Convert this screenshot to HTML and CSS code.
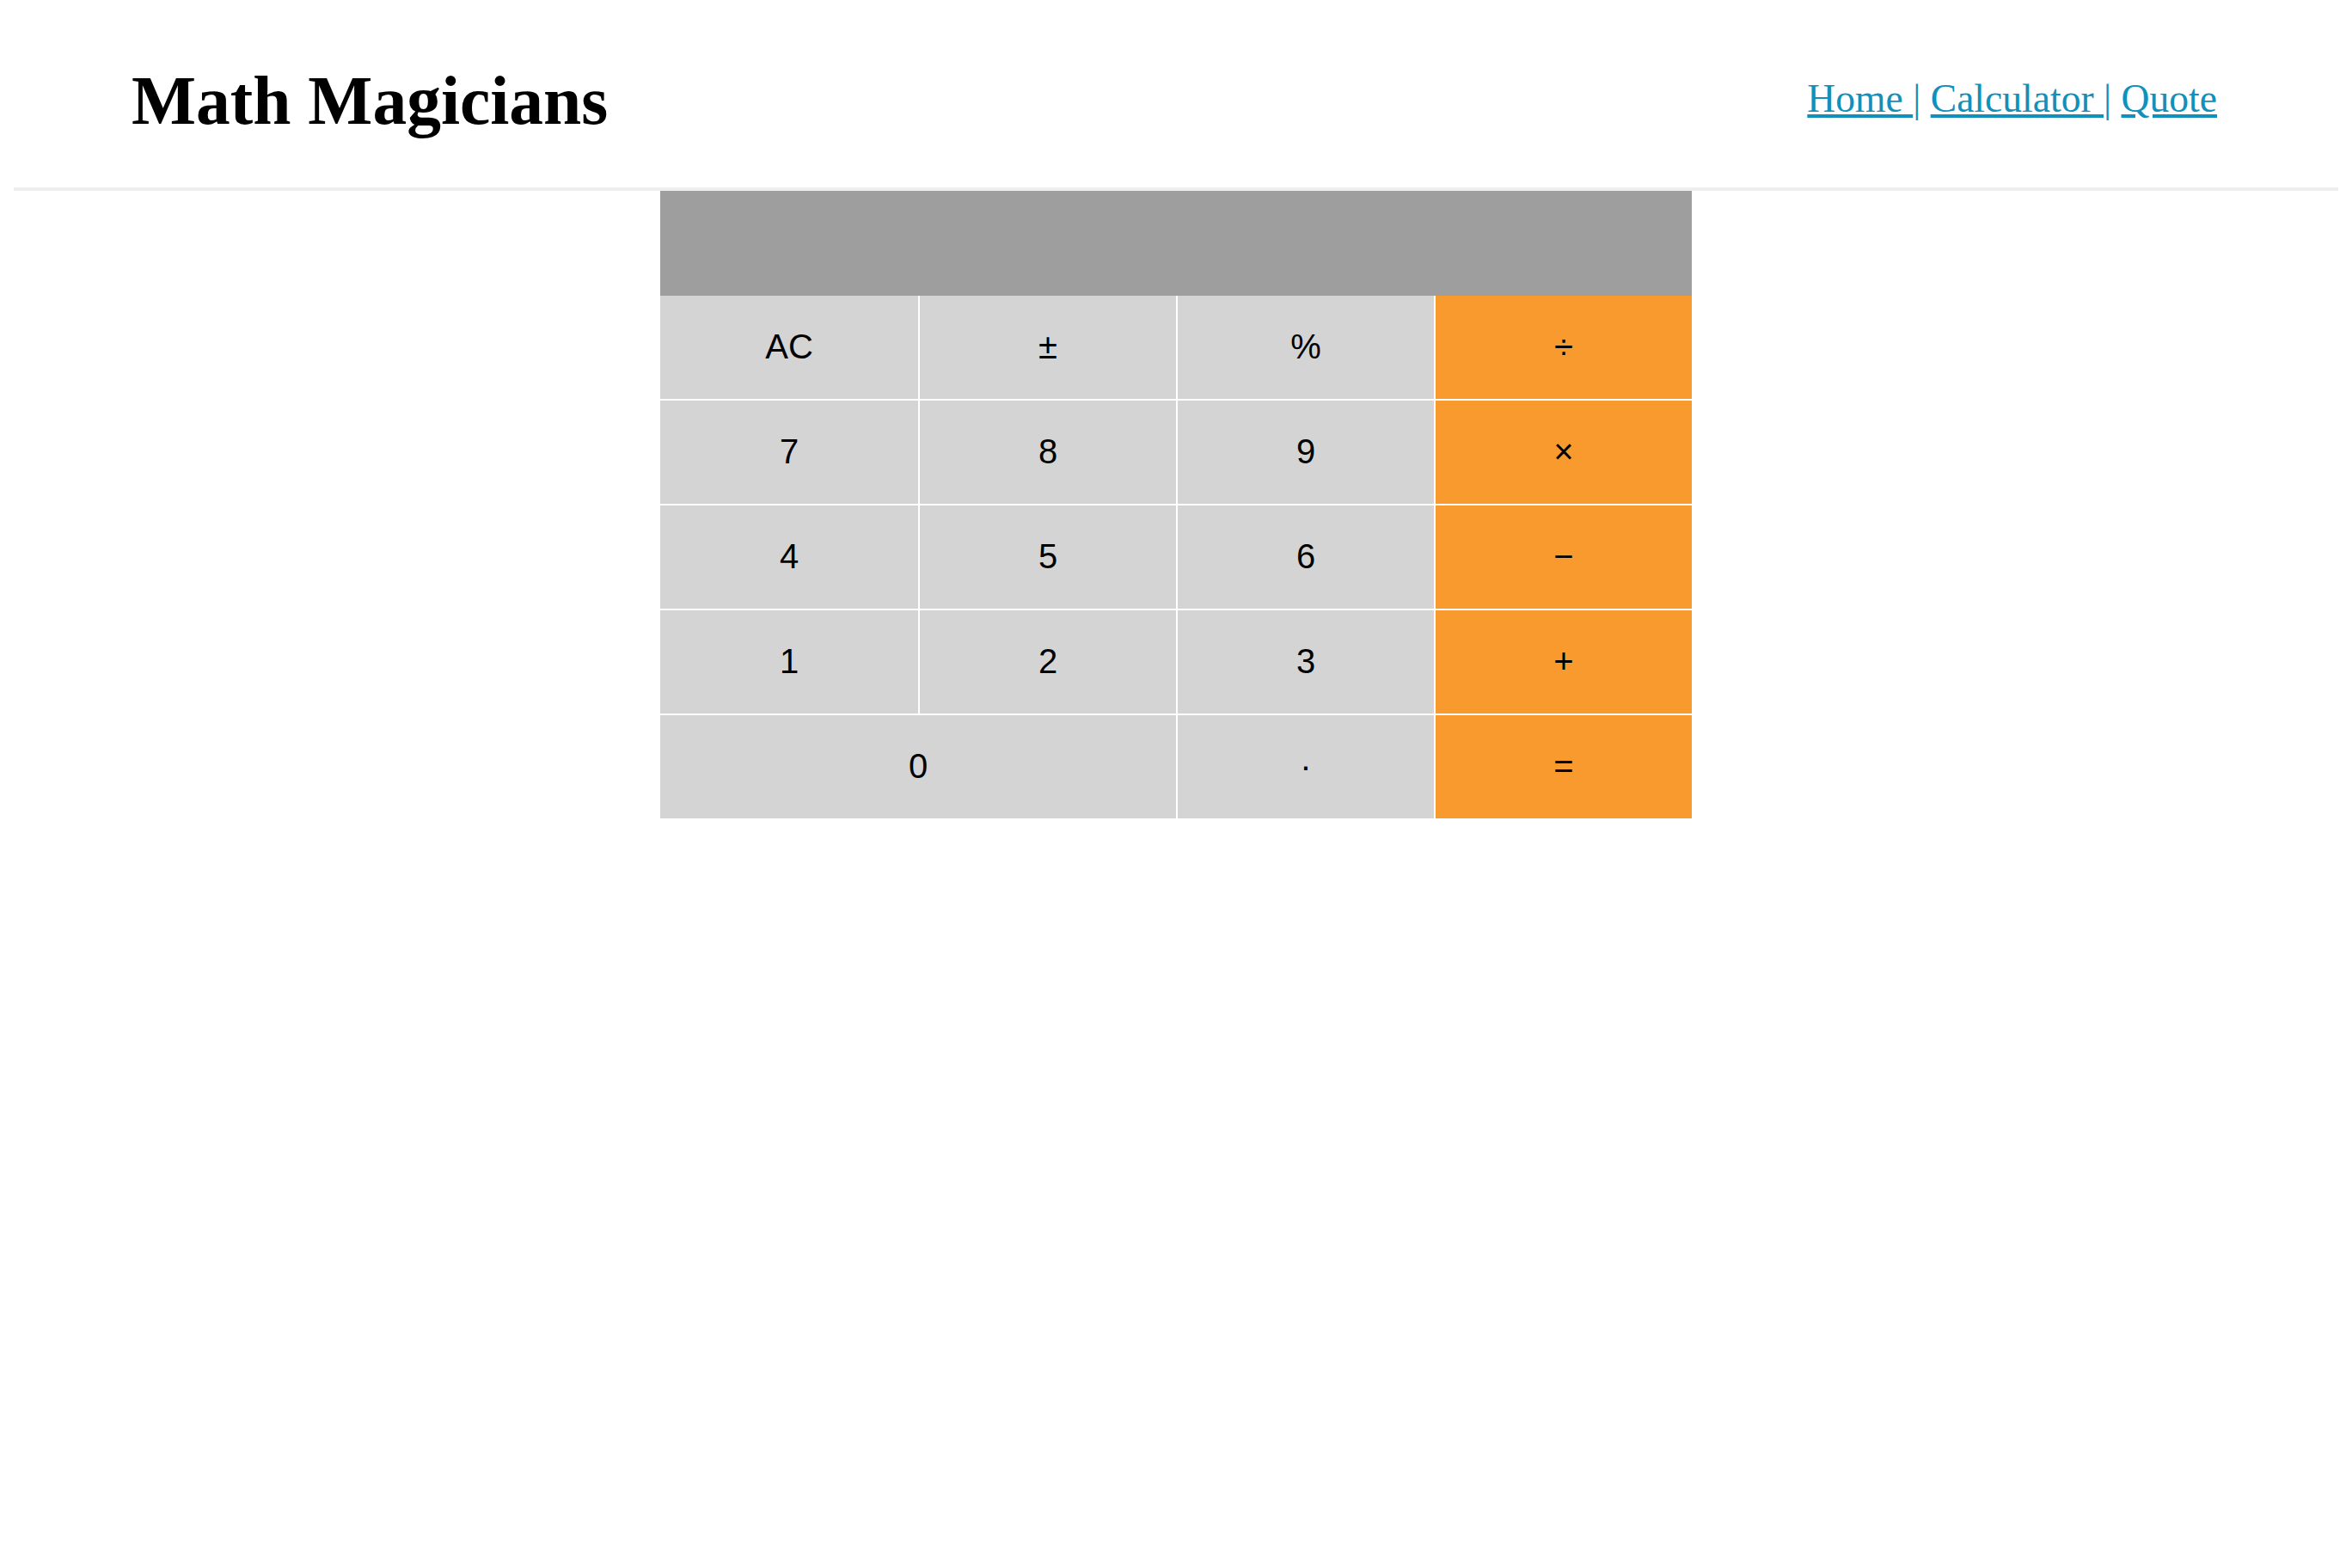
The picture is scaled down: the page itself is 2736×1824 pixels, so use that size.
FILE: index.html
```html
<!DOCTYPE html>
<html lang="en">
<head>
<meta charset="utf-8">
<title>Math Magicians</title>
<link rel="stylesheet" href="styles.css">
</head>
<body>
<header class="site-header">
  <h1 class="brand">Math Magicians</h1>
  <nav class="nav">
    <a href="#" class="nav-link">Home </a>| <a href="#" class="nav-link">Calculator </a>| <a href="#" class="nav-link">Quote</a>
  </nav>
</header>
<main class="calc">
  <div class="display"></div>
  <div class="keys">
    <button class="key">AC</button>
    <button class="key">±</button>
    <button class="key">%</button>
    <button class="key op">÷</button>
    <button class="key">7</button>
    <button class="key">8</button>
    <button class="key">9</button>
    <button class="key op">×</button>
    <button class="key">4</button>
    <button class="key">5</button>
    <button class="key">6</button>
    <button class="key op">−</button>
    <button class="key">1</button>
    <button class="key">2</button>
    <button class="key">3</button>
    <button class="key op">+</button>
    <button class="key wide">0</button>
    <button class="key">·</button>
    <button class="key op">=</button>
  </div>
</main>
</body>
</html>
```

FILE: styles.css
```css
body {
  margin: 8px;
  background: #ffffff;
  font-family: "Liberation Serif", "Times New Roman", serif;
}

.site-header {
  margin: 8px 8px 0;
  padding: 0 141px 0 137px;
  display: flex;
  justify-content: space-between;
  align-items: center;
  border-bottom: 4px solid #f0eded;
  height: 202px;
}

.brand {
  margin: 0;
  font-size: 79.5px;
  font-weight: bold;
  color: #000;
  line-height: 92px;
}

.nav {
  font-size: 45.6px;
  color: #1190bb;
  line-height: 52px;
  margin-top: -4px;
}

.nav-link {
  color: #1190bb;
  text-decoration: underline;
}

.calc {
  width: 1200px;
  margin: 0 auto;
}

.display {
  height: 122px;
  background: #9e9e9e;
}

.keys {
  display: grid;
  grid-template-columns: 300px 298px 298px 298px;
  grid-auto-rows: 120px;
  column-gap: 2px;
  row-gap: 2px;
  background: #ffffff;
}

.key {
  border: none;
  margin: 0;
  padding: 0 0 2px;
  background: #d4d4d4;
  color: #000;
  font-family: "Liberation Sans", Arial, sans-serif;
  font-size: 40px;
  display: flex;
  align-items: center;
  justify-content: center;
}

.key.op {
  background: #f99a2f;
}

.key.wide {
  grid-column: span 2;
}
```
